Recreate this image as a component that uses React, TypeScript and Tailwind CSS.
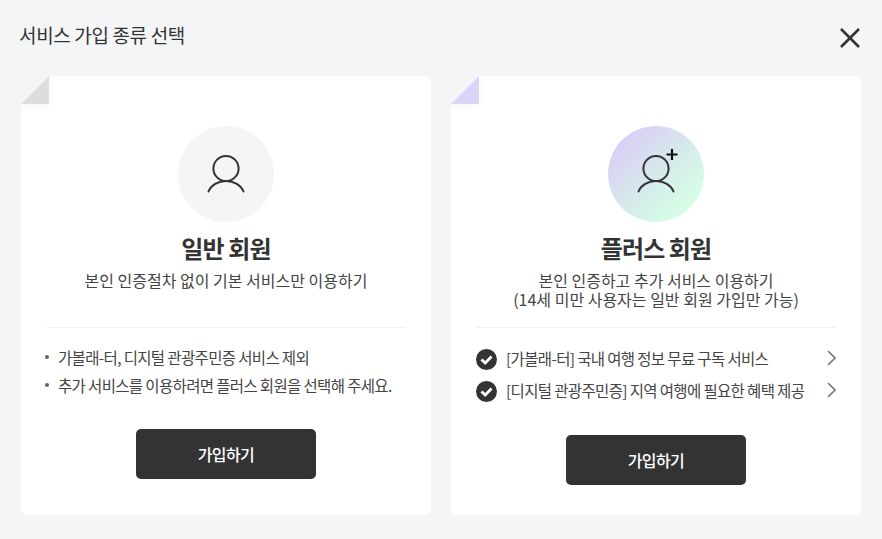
const font = { fontFamily: '"Noto Sans CJK KR", "Noto Sans", sans-serif' };

function Fold({ color }: { color: string }) {
  return (
    <svg className="absolute left-0 top-0" width="40" height="40" viewBox="0 0 40 40">
      <defs>
        <linearGradient id={`side-${color}`} x1="0" y1="0" x2="1" y2="0">
          <stop offset="0" stopColor="#eef0f2" />
          <stop offset="1" stopColor="#ffffff" />
        </linearGradient>
        <linearGradient id={`under-${color}`} x1="0" y1="0" x2="0" y2="1">
          <stop offset="0" stopColor="#eef0f2" />
          <stop offset="1" stopColor="#ffffff" />
        </linearGradient>
      </defs>
      <rect x="28" y="0" width="7" height="28" fill={`url(#side-${color})`} opacity="0.35" />
      <rect x="0" y="28" width="28" height="7" fill={`url(#under-${color})`} opacity="0.35" />
      <polygon points="0,0 28,0 0,28" fill="#f4f5f7" />
      <polygon points="28,0 28,28 0,28" fill={color} />
    </svg>
  );
}

function UserIcon({ plus }: { plus?: boolean }) {
  return (
    <svg width="96" height="96" viewBox="0 0 96 96" fill="none" stroke="#333333" strokeWidth="2">
      <circle cx="48" cy="42.5" r="12.6" />
      <path d="M30.5 65.5C33 59 40 55 48 55C56 55 63 59 65.5 65.5" strokeLinecap="round" />
      {plus && <path d="M64 23V34M58.5 28.5H69.5" stroke="#111111" strokeWidth="2.2" />}
    </svg>
  );
}

function CheckIcon() {
  return (
    <svg width="21" height="21" viewBox="0 0 21 21" className="shrink-0">
      <circle cx="10.5" cy="10.5" r="10.5" fill="#333333" />
      <path d="M5.5 10.5L9.2 14L15.5 7.5" fill="none" stroke="#ffffff" strokeWidth="2.8" />
    </svg>
  );
}

function Chevron() {
  return (
    <svg width="9" height="16" viewBox="0 0 9 16" fill="none" stroke="#777777" strokeWidth="1.6" className="mt-[-2px] shrink-0">
      <path d="M1 1L8 8L1 15" />
    </svg>
  );
}

function JoinButton() {
  return (
    <button className="mx-auto flex h-[50px] w-[180px] items-center justify-center rounded-[5px] bg-[#333333] text-[16px] font-medium tracking-[-0.6px] text-white">
      가입하기
    </button>
  );
}

export default function App() {
  return (
    <div className="flex h-[539px] w-[882px] flex-col bg-[#f4f5f7] text-[#333333]" style={font}>
      <div className="flex h-[76px] shrink-0 items-start justify-between pl-[19px] pr-[21px]">
        <h1 className="mt-[21px] text-[19px] leading-[28px] font-normal tracking-[-0.35px]">서비스 가입 종류 선택</h1>
        <svg width="22" height="22" viewBox="0 0 22 22" fill="none" stroke="#333333" strokeWidth="2.6" className="mt-[27px]">
          <path d="M2 2L20 20M20 2L2 20" />
        </svg>
      </div>

      <div className="flex gap-[20px] px-[21px]">
        <section className="relative h-[439px] w-[410px] rounded-[6px] bg-white px-[26px] pt-[50px]">
          <Fold color="#dddddd" />
          <div className="mx-auto h-[96px] w-[96px] rounded-full bg-[#f4f5f7]">
            <UserIcon />
          </div>
          <h2 className="mt-[11px] text-center text-[24px] leading-[30px] font-bold tracking-[-0.9px]">일반 회원</h2>
          <p className="mt-[8px] h-[56px] text-center text-[16px] leading-[19px] text-[#444444]">
            본인 인증절차 없이 기본 서비스만 이용하기
          </p>
          <div className="mx-auto h-px w-[358px] bg-[#f1f1f1]" />
          <ul className="mt-[15px] mb-[30px] text-[15.5px] leading-[28px] tracking-[-0.65px] text-[#444444]">
            {["가볼래-터, 디지털 관광주민증 서비스 제외", "추가 서비스를 이용하려면 플러스 회원을 선택해 주세요."].map((item) => (
              <li key={item} className="flex items-center">
                <span className="ml-[-2px] mr-[9px] h-[4px] w-[4px] rounded-full bg-[#666666]" />
                {item}
              </li>
            ))}
          </ul>
          <JoinButton />
        </section>

        <section className="relative h-[439px] w-[410px] rounded-[6px] bg-white px-[25px] pt-[50px]">
          <Fold color="#d9d5f9" />
          <div className="mx-auto h-[96px] w-[96px] rounded-full bg-gradient-to-br from-[#d9cff6] from-15% via-[#d6e9ec] via-50% to-[#d6fce6] to-80%">
            <UserIcon plus />
          </div>
          <h2 className="mt-[11px] text-center text-[24px] leading-[30px] font-bold tracking-[-0.9px]">플러스 회원</h2>
          <p className="mt-[8px] h-[56px] text-center text-[16px] leading-[19px] text-[#444444]">
            본인 인증하고 추가 서비스 이용하기
            <br />
            (14세 미만 사용자는 일반 회원 가입만 가능)
          </p>
          <div className="mx-auto h-px w-[360px] bg-[#f1f1f1]" />
          <ul className="mt-[15px] mb-[28px] text-[15.5px] tracking-[-0.65px] text-[#444444]">
            {["[가볼래-터] 국내 여행 정보 무료 구독 서비스", "[디지털 관광주민증] 지역 여행에 필요한 혜택 제공"].map((item) => (
              <li key={item} className="flex h-[32px] items-center justify-between">
                <span className="flex items-center gap-[9px]">
                  <CheckIcon />
                  {item}
                </span>
                <Chevron />
              </li>
            ))}
          </ul>
          <JoinButton />
        </section>
      </div>
    </div>
  );
}
